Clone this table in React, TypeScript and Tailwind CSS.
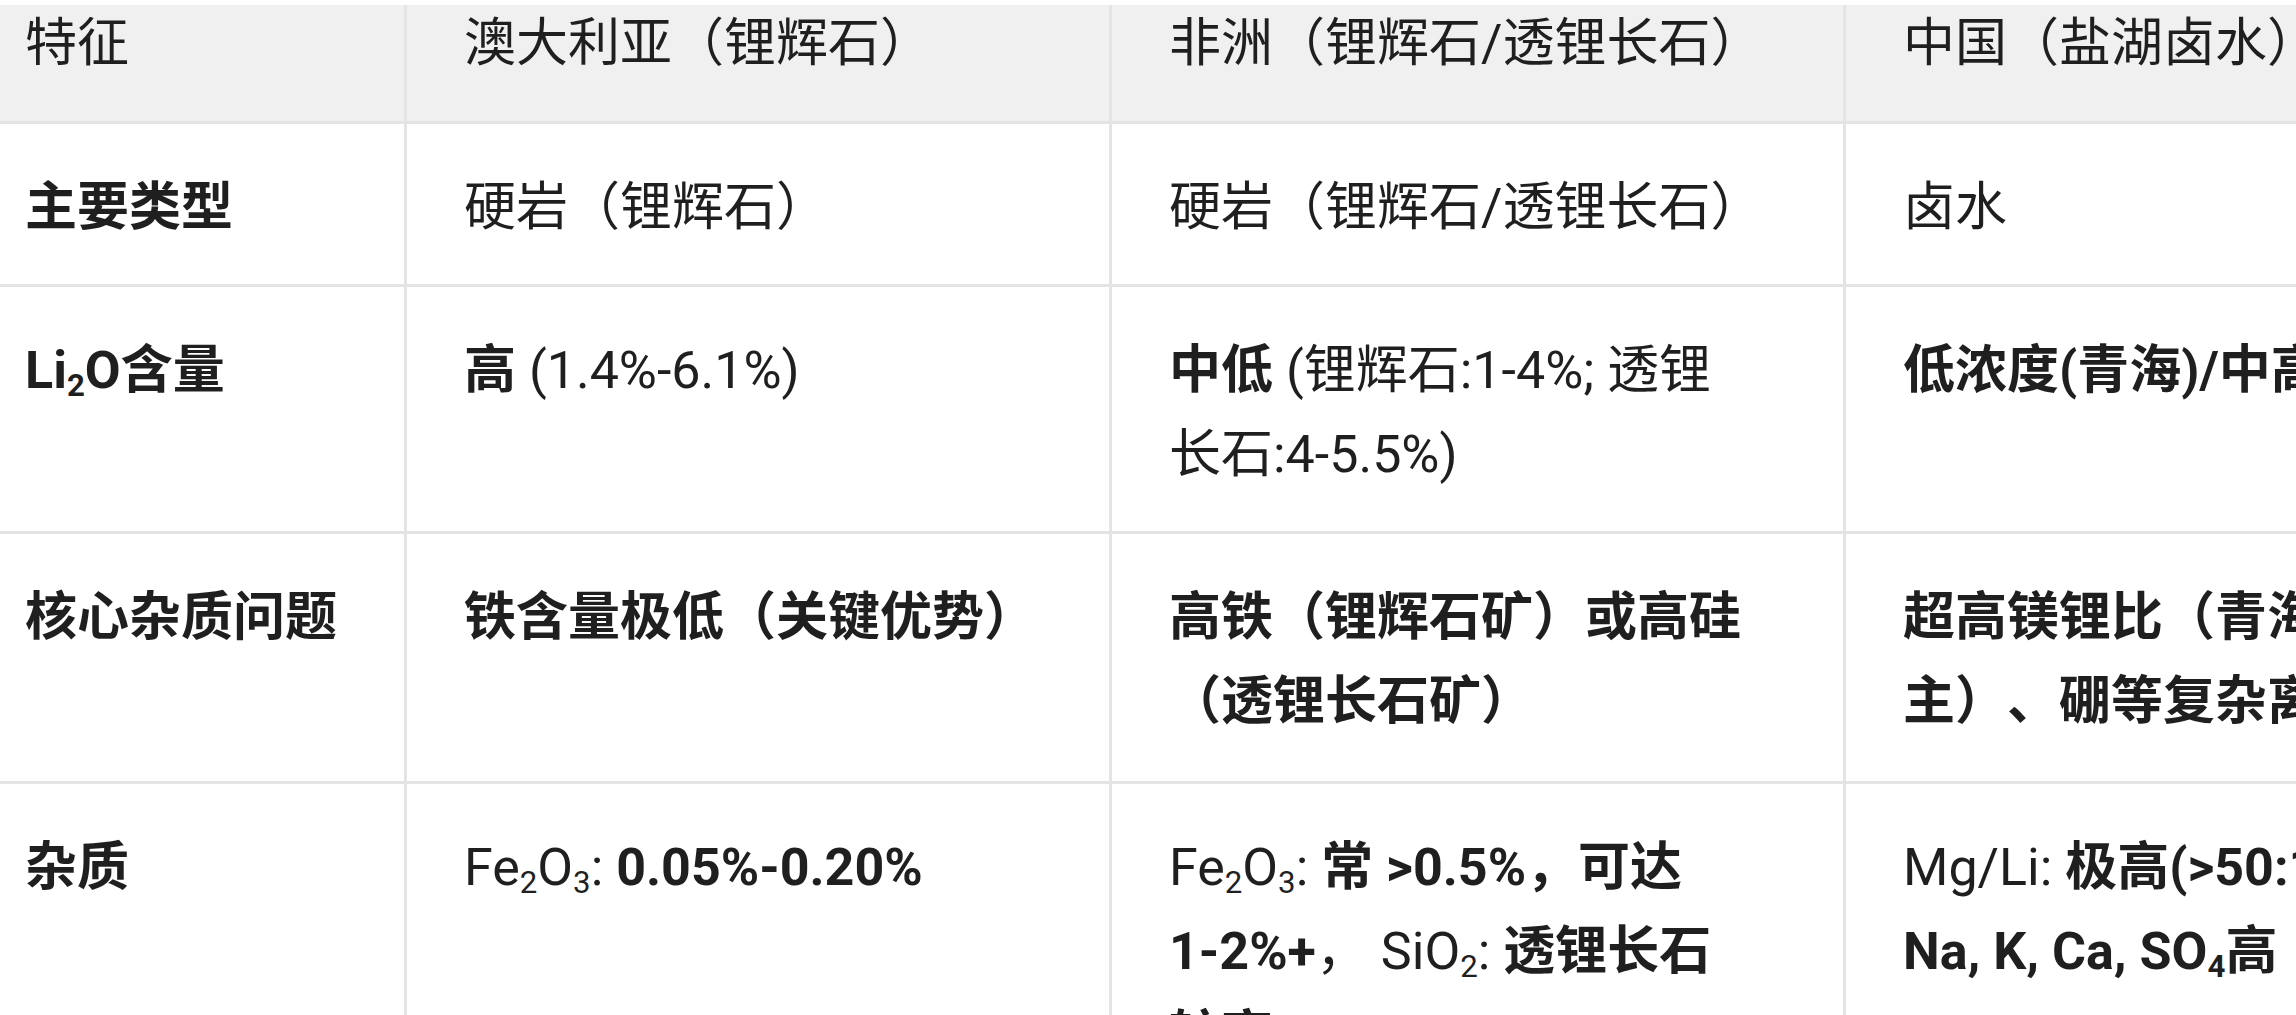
import type { ReactNode } from "react";

const Sub = ({ children }: { children: ReactNode }) => (
  <sub className="text-[0.6em]">{children}</sub>
);

const B = ({ children }: { children: ReactNode }) => (
  <span className="font-bold">{children}</span>
);

type Row = {
  label: ReactNode;
  au: ReactNode;
  af: ReactNode;
  cn: ReactNode;
  pb: string;
};

const headers = ["特征", "澳大利亚（锂辉石）", "非洲（锂辉石/透锂长石）", "中国（盐湖卤水）"];

const rows: Row[] = [
  {
    label: "主要类型",
    au: "硬岩（锂辉石）",
    af: "硬岩（锂辉石/透锂长石）",
    cn: "卤水",
    pb: "pb-[34px]",
  },
  {
    label: (
      <>
        Li<Sub>2</Sub>O含量
      </>
    ),
    au: (
      <>
        <B>高</B> (1.4%-6.1%)
      </>
    ),
    af: (
      <>
        <B>中低</B> (锂辉石:1-4%; 透锂长石:4-5.5%)
      </>
    ),
    cn: <B>低浓度(青海)/中高(西藏)</B>,
    pb: "pb-[34px]",
  },
  {
    label: "核心杂质问题",
    au: <B>铁含量极低（关键优势）</B>,
    af: <B>高铁（锂辉石矿）或高硅（透锂长石矿）</B>,
    cn: (
      <span className="font-bold [text-spacing-trim:space-all]">
        超高镁锂比（青海为主）、硼等复杂离子
      </span>
    ),
    pb: "pb-[37px]",
  },
  {
    label: "杂质",
    au: (
      <>
        Fe<Sub>2</Sub>O<Sub>3</Sub>: <B>0.05%-0.20%</B>
      </>
    ),
    af: (
      <>
        Fe<Sub>2</Sub>O<Sub>3</Sub>: <B>常 &gt;0.5%，可达 </B>
        <span className="whitespace-nowrap">
          <B>1-2%+</B>，
        </span>{" "}
        SiO<Sub>2</Sub>: <B>透锂长石较高</B>
      </>
    ),
    cn: (
      <>
        Mg/Li: <B>极高(&gt;50:1)</B>
        <br />
        <B>
          Na, K, Ca, SO<Sub>4</Sub>高
        </B>
      </>
    ),
    pb: "pb-[34px]",
  },
];

const colPad = [
  "pl-[25px] pr-[20px]",
  "pl-[57px] pr-[40px]",
  "pl-[57px] pr-[96px]",
  "pl-[57px] pr-[44px]",
];

export default function App() {
  return (
    <div className="h-[1015px] w-full overflow-hidden bg-white pt-[5px]">
      <div className="grid w-max grid-cols-[407px_705px_734px_694px] font-[Roboto,'Noto_Sans_CJK_SC',sans-serif] text-[52px] text-[#1f1f1f]">
        {/* Header */}
        {headers.map((h, i) => (
          <div
            key={h}
            className={`h-[119px] border-b-[3px] border-r-[3px] border-[#e4e4e4] bg-[#f0f0f0] leading-[78px] whitespace-nowrap ${colPad[i]}`}
          >
            {h}
          </div>
        ))}

        {/* Body */}
        {rows.map((r, ri) =>
          [r.label, r.au, r.af, r.cn].map((cell, ci) => (
            <div
              key={`${ri}-${ci}`}
              className={`border-b-[3px] border-r-[3px] border-[#e4e4e4] pt-[42px] leading-[84px] ${r.pb} ${colPad[ci]} ${
                ci === 0 ? "font-bold" : ""
              }`}
            >
              {cell}
            </div>
          ))
        )}
      </div>
    </div>
  );
}
